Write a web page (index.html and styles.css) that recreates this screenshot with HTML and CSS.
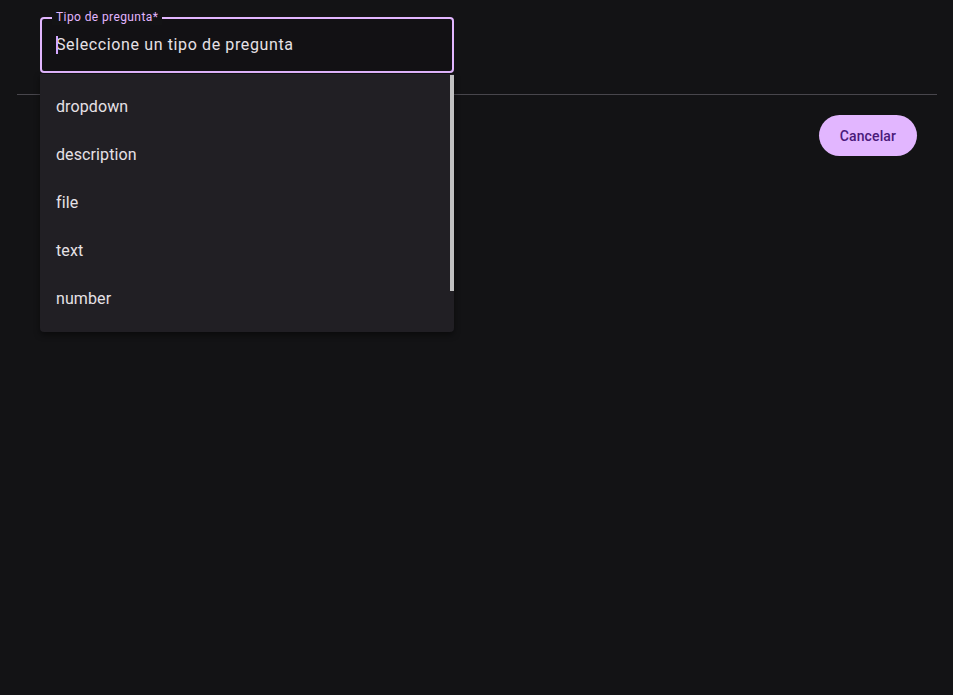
FILE: index.html
```html
<!DOCTYPE html>
<html lang="es">
<head>
<meta charset="utf-8">
<title>Tipo de pregunta</title>
<link rel="stylesheet" href="styles.css">
</head>
<body>
<div class="dialog">
  <div class="content">
    <div class="field">
      <span class="label">Tipo de pregunta*</span>
      <div class="input"><span class="caret"></span>Seleccione un tipo de pregunta</div>
      <div class="panel">
        <div class="option">dropdown</div>
        <div class="option">description</div>
        <div class="option">file</div>
        <div class="option">text</div>
        <div class="option">number</div>
        <span class="thumb"></span>
      </div>
    </div>
  </div>
  <div class="divider"></div>
  <div class="actions">
    <button class="btn">Cancelar</button>
  </div>
</div>
</body>
</html>
```

FILE: styles.css
```css
html, body {
  margin: 0;
  padding: 0;
  background: #131315;
  font-family: Roboto, "Liberation Sans", sans-serif;
  color: #e6e1e6;
}

body {
  min-height: 100vh;
}

.dialog {
  padding: 17px 16px 0 17px;
}

.content {
  padding: 0 0 21px 23px;
}

.field {
  position: relative;
  width: 414px;
  height: 56px;
  box-sizing: border-box;
  border: 2px solid #e2b6ff;
  border-radius: 4px;
  background: #121114;
}

.label {
  position: absolute;
  top: -10px;
  left: 10px;
  padding: 0 4px;
  font-size: 12px;
  line-height: 16px;
  letter-spacing: 0.4px;
  color: #e2b6ff;
  background: #131315;
}

.input {
  position: relative;
  height: 50px;
  display: flex;
  align-items: center;
  padding-left: 14px;
  font-size: 16px;
  letter-spacing: 0.62px;
  color: #e6e1e6;
}

.caret {
  position: absolute;
  left: 14px;
  top: 17px;
  width: 2px;
  height: 18px;
  background: #d4a8ff;
}

.panel {
  position: absolute;
  top: 55px;
  left: -2px;
  width: 414px;
  height: 258px;
  box-sizing: border-box;
  padding: 8px 0;
  overflow: hidden;
  background: #211f24;
  border-radius: 0 0 4px 4px;
  box-shadow: 0 3px 6px rgba(0, 0, 0, 0.45);
  z-index: 2;
}

.option {
  height: 48px;
  display: flex;
  align-items: center;
  padding-left: 16px;
  font-size: 16px;
  letter-spacing: 0.1px;
  color: #e6e1e6;
}

.thumb {
  position: absolute;
  top: 1px;
  right: 0;
  width: 4px;
  height: 216px;
  background: #c1c1c1;
}

.divider {
  height: 1px;
  background: #48464c;
}

.actions {
  display: flex;
  justify-content: flex-end;
  padding: 20px 20px 0 0;
}

.btn {
  height: 41px;
  padding: 0 21px;
  border: none;
  border-radius: 21px;
  background: #e2b6ff;
  color: #4a1a7a;
  font-family: Roboto, "Liberation Sans", sans-serif;
  font-size: 14px;
  font-weight: 500;
  letter-spacing: 0.1px;
}
```
